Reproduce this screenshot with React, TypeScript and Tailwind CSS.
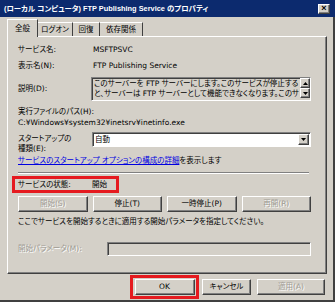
import clsx from "clsx";
import type { ReactNode } from "react";

const raised =
    "border border-t-white border-l-white border-r-[#404040] border-b-[#404040] shadow-[inset_-1px_-1px_0_#808080]";
const sunken =
    "border border-t-[#808080] border-l-[#808080] border-r-white border-b-white shadow-[inset_1px_1px_0_#404040]";

function Btn({ children, disabled, className }: { children: ReactNode; disabled?: boolean; className?: string }) {
    return (
        <div
            className={clsx(
                "flex h-[16px] items-center justify-center bg-[#d4d0c8]",
                raised,
                disabled ? "text-[#a09c94] [text-shadow:1px_1px_0_#fff]" : "text-black",
                className
            )}
        >
            {children}
        </div>
    );
}

function Arrow({ up }: { up?: boolean }) {
    return (
        <svg width="5" height="3" viewBox="0 0 5 3">
            <path d={up ? "M2.5 0 L5 3 L0 3 Z" : "M0 0 L5 0 L2.5 3 Z"} fill="#000" />
        </svg>
    );
}

export default function App() {
    return (
        <div className="flex h-[302px] w-[335px] flex-col overflow-hidden bg-[#d4d0c8] font-['DejaVu_Sans','Noto_Sans_CJK_JP',sans-serif] text-[7.5px] leading-[12px] text-black [font-feature-settings:'palt']">
            {/* title bar */}
            <div className="flex h-[17px] shrink-0 items-center justify-between bg-[#0c2a6e] pl-[4px] pr-[5px] font-['Liberation_Sans','Noto_Sans_CJK_JP',sans-serif] text-[7.4px] font-bold text-white">
                <span className="whitespace-nowrap">(ローカル コンピュータ) FTP Publishing Service のプロパティ</span>
                <div className={clsx("flex h-[10px] w-[12px] items-center justify-center bg-[#d4d0c8] text-[9px] leading-none text-black", raised)}>
                    ×
                </div>
            </div>

            <div className="flex flex-1 flex-col border-r-2 border-b-2 border-[#404040]">
                {/* tabs */}
                <div className="mt-[2px] flex h-[17px] items-end pl-[7px]">
                    <div className="relative z-10 -mb-[1px] flex h-[18px] w-[31px] items-center justify-center border-t border-l border-r border-t-white border-l-white border-r-[#404040] bg-[#d4d0c8]">
                        全般
                    </div>
                    <div className="flex h-[14px] w-[35px] items-center justify-center border-t border-r border-t-white border-r-[#404040]">
                        ログオン
                    </div>
                    <div className="flex h-[14px] w-[27px] items-center justify-center border-t border-r border-t-white border-r-[#404040]">
                        回復
                    </div>
                    <div className="flex h-[14px] w-[43px] items-center justify-center border-t border-r border-t-white border-r-[#404040]">
                        依存関係
                    </div>
                </div>

                {/* panel */}
                <div className={clsx("ml-[7px] flex h-[238px] w-[320px] flex-col pl-[10px] pt-[7px]", raised)}>
                    <div className="flex h-[12px] items-center">
                        <span className="w-[75px]">サービス名:</span>
                        <span>MSFTPSVC</span>
                    </div>
                    <div className="mt-[4px] flex h-[12px] items-center">
                        <span className="w-[75px]">表示名(N):</span>
                        <span>FTP Publishing Service</span>
                    </div>
                    <div className="mt-[5px] flex h-[24px] items-center">
                        <span className="w-[73px]">説明(D):</span>
                        <div className={clsx("flex h-[24px] w-[220px] overflow-hidden", sunken)}>
                            <div className="flex-1 overflow-hidden whitespace-nowrap pl-[2px] pt-[1px] leading-[10px]">
                                <div>このサーバーを FTP サーバーにします。このサービスが停止する</div>
                                <div>と、サーバーは FTP サーバーとして機能できなくなります。このサ</div>
                            </div>
                            <div className="flex w-[10px] flex-col">
                                <div className={clsx("flex h-[10px] items-center justify-center", raised)}>
                                    <Arrow up />
                                </div>
                                <div className={clsx("flex h-[10px] items-center justify-center", raised)}>
                                    <Arrow />
                                </div>
                            </div>
                        </div>
                    </div>
                    <div className="mt-[5px] h-[12px]">実行ファイルのパス(H):</div>
                    <div className="h-[10px] leading-[10px]">C:¥Windows¥system32¥inetsrv¥inetinfo.exe</div>
                    <div className="mt-[4px] flex h-[22px] items-start">
                        <div className="w-[74px] pt-[2px] leading-[10px]">
                            <div>スタートアップの</div>
                            <div>種類(E):</div>
                        </div>
                        <div className={clsx("flex h-[15px] w-[219px] items-center justify-between bg-white pl-[2px] pr-[1px]", sunken)}>
                            <span>自動</span>
                            <div className={clsx("flex h-[11px] w-[11px] items-center justify-center bg-[#d4d0c8]", raised)}>
                                <Arrow />
                            </div>
                        </div>
                    </div>
                    <div className="mt-[1px] h-[12px] whitespace-nowrap">
                        <span className="text-[#0000e0] underline">サービスのスタートアップ オプションの構成の詳細</span>
                        <span>を表示します</span>
                    </div>
                    <div className="mt-[5px] h-[2px] w-[291px] border-t border-b border-t-[#808080] border-b-white" />
                    <div className="-ml-[6px] mt-[2px] flex h-[17px] w-[107px] items-center border-[3px] border-[#e51a1f] pl-[3px]">
                        <span className="w-[74px]">サービスの状態:</span>
                        <span>開始</span>
                    </div>
                    <div className="mt-[3px] grid w-[293px] grid-cols-4 gap-[5px]">
                        <Btn disabled>開始(S)</Btn>
                        <Btn>停止(T)</Btn>
                        <Btn>一時停止(P)</Btn>
                        <Btn disabled>再開(R)</Btn>
                    </div>
                    <div className="mt-[4px] h-[12px] whitespace-nowrap">
                        ここでサービスを開始するときに適用する開始パラメータを指定してください。
                    </div>
                    <div className="mt-[14px] flex h-[14px] items-center">
                        <span className="w-[89px] text-[#a09c94] [text-shadow:1px_1px_0_#fff]">開始パラメータ(M):</span>
                        <div className={clsx("h-[14px] w-[204px]", sunken)} />
                    </div>
                </div>

                {/* dialog buttons */}
                <div className="mt-[1px] flex items-center pl-[130px]">
                    <div className="flex h-[24px] w-[69px] items-center justify-center border-[3px] border-[#e51a1f]">
                        <Btn className="w-[60px]">OK</Btn>
                    </div>
                    <Btn className="ml-[3px] w-[49px]">キャンセル</Btn>
                    <Btn disabled className="ml-[6px] w-[68px]">
                        適用(A)
                    </Btn>
                </div>
            </div>
        </div>
    );
}
